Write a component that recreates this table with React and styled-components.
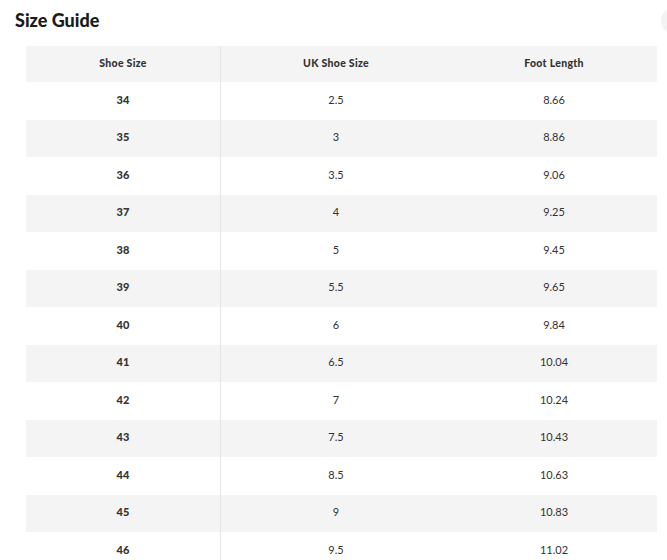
import React from "react";
import styled, { createGlobalStyle } from "styled-components";

const font_fs = "'Lato', 'Noto Sans', 'Liberation Sans', sans-serif";

const rows = [
  ["34", "2.5", "8.66"],
  ["35", "3", "8.86"],
  ["36", "3.5", "9.06"],
  ["37", "4", "9.25"],
  ["38", "5", "9.45"],
  ["39", "5.5", "9.65"],
  ["40", "6", "9.84"],
  ["41", "6.5", "10.04"],
  ["42", "7", "10.24"],
  ["43", "7.5", "10.43"],
  ["44", "8.5", "10.63"],
  ["45", "9", "10.83"],
  ["46", "9.5", "11.02"],
];

const GlobalStyle = createGlobalStyle`
  html, body {
    margin: 0;
    background: #fff;
    font-family: ${font_fs};
    color: #333;
  }
`;

export default function App() {
  return (
    <>
      <GlobalStyle />
      <Page>
        <CloseButton aria-label="close" />
        <Title>Size Guide</Title>
        <Table>
          <HeadRow>
            <HeadCell $divider>Shoe Size</HeadCell>
            <HeadCell>UK Shoe Size</HeadCell>
            <HeadCell>Foot Length</HeadCell>
          </HeadRow>
          {rows.map((r, i) => (
            <Row key={r[0]} $shade={i % 2 === 1}>
              <Cell $bold $divider>
                {r[0]}
              </Cell>
              <Cell>{r[1]}</Cell>
              <Cell>{r[2]}</Cell>
            </Row>
          ))}
        </Table>
      </Page>
    </>
  );
}

const Page = styled.div`
  position: relative;
  width: 667px;
  height: 560px;
  overflow: hidden;
  padding: 8px 10px 0 15px;
  box-sizing: border-box;
`;

const CloseButton = styled.div`
  position: absolute;
  top: 7px;
  left: 661px;
  width: 28px;
  height: 28px;
  border-radius: 50%;
  background: #f3f3f3;
`;

const Title = styled.h1`
  margin: 0;
  font-size: 18px;
  line-height: 24px;
  font-weight: 900;
  color: #1a1a1a;
`;

const Table = styled.div`
  margin: 14px 0 0 11px;
  width: 631px;
`;

const HeadRow = styled.div`
  display: grid;
  grid-template-columns: 195px 230px 1fr;
  height: 36px;
  background: #f4f4f4;
`;

const Row = styled.div`
  display: grid;
  grid-template-columns: 195px 230px 1fr;
  height: 37.5px;
  background: ${(p) => (p.$shade ? "#f4f4f4" : "#fff")};
`;

const HeadCell = styled.div`
  display: flex;
  align-items: center;
  justify-content: center;
  padding-bottom: 3px;
  font-size: 10.5px;
  font-weight: 900;
  letter-spacing: 0.3px;
  color: #333;
  border-right: ${(p) => (p.$divider ? "1px solid #e4e4e4" : "none")};
`;

const Cell = styled.div`
  display: flex;
  align-items: center;
  justify-content: center;
  padding-bottom: 3px;
  font-size: 11px;
  font-weight: ${(p) => (p.$bold ? 900 : 400)};
  color: #333;
  border-right: ${(p) => (p.$divider ? "1px solid #e4e4e4" : "none")};
`;
